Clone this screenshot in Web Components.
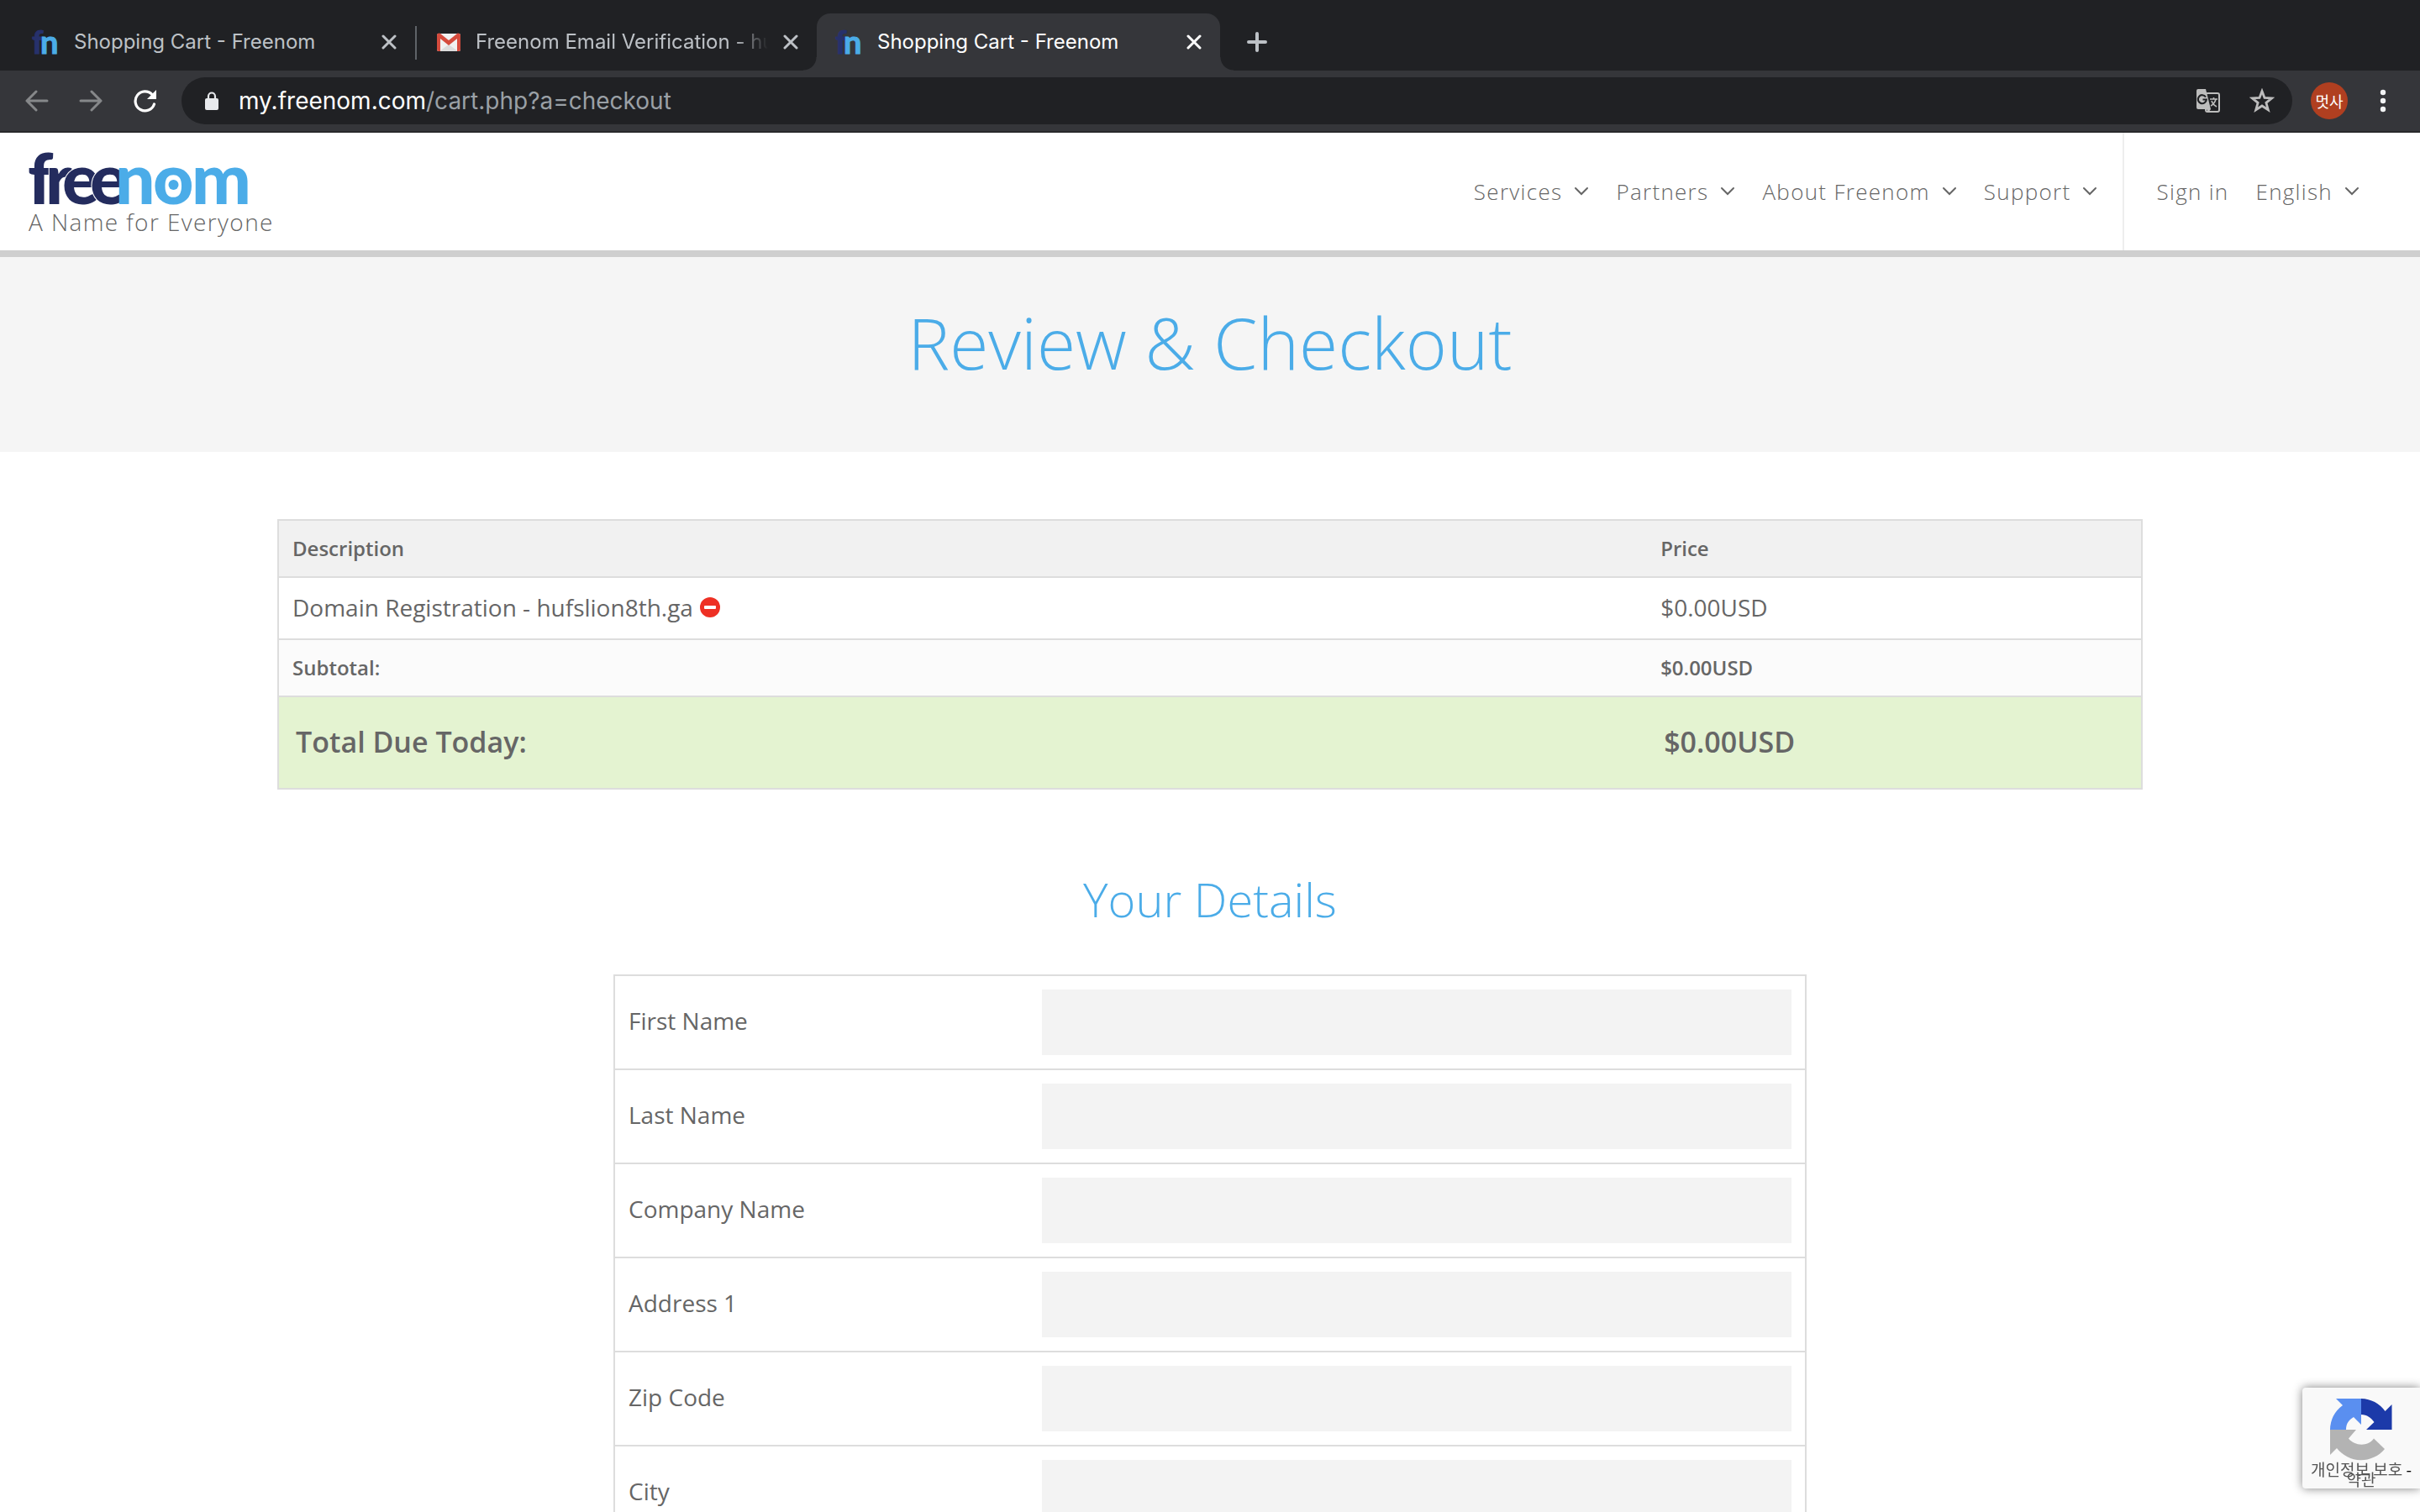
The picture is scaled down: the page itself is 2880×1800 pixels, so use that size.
<!DOCTYPE html>
<html lang="en">
<head>
<meta charset="utf-8">
<title>Shopping Cart - Freenom</title>
<style>
html,body{margin:0;height:100%}
body{overflow:hidden;background:#fff;color:#666;font-family:"Open Sans","Noto Sans CJK KR",sans-serif}
</style>
</head>
<body>
<browser-window>
  <tab-strip slot="chrome">
    <browser-tab icon="fn">Shopping Cart - Freenom</browser-tab>
    <browser-tab icon="gmail" divided>Freenom Email Verification - hu</browser-tab>
    <browser-tab icon="fn" active>Shopping Cart - Freenom</browser-tab>
  </tab-strip>
  <browser-toolbar slot="chrome"><span slot="host">my.freenom.com</span><span slot="path">/cart.php?a=checkout</span></browser-toolbar>
  <site-header>
    <site-logo slot="logo">A Name for Everyone</site-logo>
    <nav-item menu>Services</nav-item>
    <nav-item menu>Partners</nav-item>
    <nav-item menu>About Freenom</nav-item>
    <nav-item menu>Support</nav-item>
    <nav-item slot="account">Sign in</nav-item>
    <nav-item slot="account" menu>English</nav-item>
  </site-header>
  <page-banner>Review &amp; Checkout</page-banner>
  <cart-summary></cart-summary>
  <details-form>Your Details</details-form>
  <recaptcha-badge></recaptcha-badge>
</browser-window>

<script>
const define = (name, html) => {
  const t = document.createElement('template');
  t.innerHTML = html;
  customElements.define(name, class extends HTMLElement {
    constructor() {
      super();
      this.attachShadow({ mode: 'open' }).append(t.content.cloneNode(true));
    }
  });
};

define('browser-window', `
<style>
:host{display:flex;flex-direction:column;height:100vh;background:#fff}
main{flex:1;min-height:0;overflow:hidden}
</style>
<slot name="chrome"></slot><main><slot></slot></main>`);

define('tab-strip', `
<style>
:host{display:flex;align-items:flex-end;height:84px;padding-left:16px;background:#202124}
button{display:flex;width:56px;height:68px;margin-left:16px;padding:0;border:0;background:none;align-items:center;justify-content:center}
svg{display:block}
</style>
<slot></slot>
<button aria-label="New tab"><svg width="24" height="24" viewBox="0 0 24 24"><path d="M12 2v20M2 12h20" stroke="#bdc1c6" stroke-width="4" stroke-linecap="round"/></svg></button>`);

/* One tab: favicon, title that fades out at its end, close button. */
customElements.define('browser-tab', class extends HTMLElement {
  constructor() {
    super();
    const fn = `<svg class="icon" width="32" height="32" viewBox="0 0 32 32" font-family="Lato" font-weight="700" font-size="38"><text x="-2" y="30" fill="#27316b" stroke="#27316b">f</text><text x="8" y="30" fill="#4bace8" stroke="#4bace8">n</text></svg>`;
    const gmail = `<svg class="icon" width="32" height="32" viewBox="0 0 32 32"><rect x="2" y="6" width="28" height="21" rx="2" fill="#f1f1f1"/><path d="M16 19L27 27H5z" fill="#dcdcdc"/><path d="M2 8v17a2 2 0 0 0 2 2h2V12l10 8 10-8v15h2a2 2 0 0 0 2-2V8c0-2-3-3-4-2L16 14 6 6C4 5 2 6 2 8z" fill="#d54b3d"/></svg>`;
    this.attachShadow({ mode: 'open' }).innerHTML = `
<style>
:host{display:flex;position:relative;box-sizing:border-box;width:478px;height:68px;padding:0 16px 0 24px;align-items:center;color:#bdc1c6;font-family:Inter,"Liberation Sans",sans-serif;font-size:24px;line-height:32px}
:host([active]){background:#35363a;color:#fff;border-radius:16px 16px 0 0;width:480px}
:host([divided])::before{content:"";position:absolute;left:0;top:15px;width:2px;height:40px;background:#5f6368}
:host([active])::before,:host([active])::after{content:"";position:absolute;bottom:0;width:16px;height:16px}
:host([active])::before{right:100%;background:radial-gradient(circle at 0 0,#202124 15px,#35363a 16px)}
:host([active])::after{left:100%;background:radial-gradient(circle at 100% 0,#202124 15px,#35363a 16px)}
.icon{flex:none;margin-right:16px;overflow:visible}
.title{flex:1;min-width:0;overflow:hidden;white-space:nowrap}
:host([divided]) .title{-webkit-mask-image:linear-gradient(90deg,#000 calc(100% - 40px),transparent);mask-image:linear-gradient(90deg,#000 calc(100% - 40px),transparent)}
button{flex:none;display:flex;margin:0 0 0 12px;padding:6px;border:0;background:none;color:inherit}
</style>
${this.getAttribute('icon') === 'gmail' ? gmail : fn}<span class="title"><slot></slot></span>
<button aria-label="Close tab"><svg width="18" height="18" viewBox="0 0 18 18"><path d="M2 2l14 14M16 2L2 16" stroke="currentColor" stroke-width="3" stroke-linecap="round"/></svg></button>`;
  }
});

define('browser-toolbar', `
<style>
:host{display:flex;box-sizing:border-box;height:74px;padding:8px 28px 0 20px;align-items:flex-start;background:#35363a;border-bottom:2px solid #28292b;font-family:Inter,"Liberation Sans",sans-serif;font-size:28px;line-height:56px}
button{flex:none;display:flex;align-items:center;justify-content:center;width:48px;height:56px;margin-right:16px;padding:0;border:0;background:none}
.omni{flex:1;display:flex;align-items:center;box-sizing:border-box;height:56px;margin-left:4px;padding:0 20px 0 24px;border-radius:28px;background:#202124;color:#9aa0a6}
.url{flex:1;margin-left:20px;white-space:nowrap}
.omni button{width:32px;margin:0 0 0 32px}
::slotted([slot=host]){color:#fff}
.me{width:44px;height:44px;border-radius:50%;margin:6px 0 0 22px;background:#b03f20;color:#fff;font:18px/44px "Noto Sans CJK KR",sans-serif}
.more{width:32px;margin:0 0 0 26px}
</style>
<button aria-label="Back"><svg width="28" height="28" viewBox="0 0 28 28" fill="none" stroke="#86888a" stroke-width="3" stroke-linecap="round" stroke-linejoin="round"><path d="M26 14H2M13 3L2 14l11 11"/></svg></button>
<button aria-label="Forward"><svg width="28" height="28" viewBox="0 0 28 28" fill="none" stroke="#86888a" stroke-width="3" stroke-linecap="round" stroke-linejoin="round"><path d="M2 14h24M15 3l11 11-11 11"/></svg></button>
<button aria-label="Reload"><svg width="28" height="28" viewBox="0 0 28 28"><path d="M25.500 18A11.500 11.500 0 1 1 23 6.500" fill="none" stroke="#fff" stroke-width="3.200" stroke-linecap="round"/><path d="M28 1v11H17z" fill="#fff"/></svg></button>
<div class="omni">
<svg width="24" height="24" viewBox="0 0 24 24"><rect x="4" y="9" width="16" height="14" rx="2" fill="#e8eaed"/><path d="M8 10V6.500a4 4 0 0 1 8 0V10" fill="none" stroke="#e8eaed" stroke-width="2.200"/></svg>
<span class="url"><slot name="host"></slot><slot name="path"></slot></span>
<button aria-label="Translate this page"><svg width="30" height="30" viewBox="0 0 30 30"><rect x="12" y="6" width="16" height="22" rx="2" fill="none" stroke="#bdbdbd" stroke-width="2"/><path d="M3 1h9l6 24H3a2 2 0 0 1-2-2V3a2 2 0 0 1 2-2z" fill="#bdbdbd"/><path d="M13 25h5l-3 4z" fill="#bdbdbd"/><path d="M12 10.500A5 5 0 1 0 12.800 13.500H8.500" fill="none" stroke="#202124" stroke-width="2.200"/><path d="M17 13h9M21.500 11v2M24 13c-1 4-4 7-6 8M19 15c1 3 4 6 6 7" fill="none" stroke="#bdbdbd" stroke-width="1.600"/></svg></button>
<button aria-label="Bookmark this tab"><svg width="30" height="30" viewBox="0 0 30 30"><path d="M15 3.500l3 8 8.700.4-6.800 5.400 2.400 8.400L15 21l-7.300 4.700 2.400-8.400-6.800-5.400 8.700-.4z" fill="none" stroke="#bdbdbd" stroke-width="2.800"/></svg></button>
</div>
<button class="me" aria-label="Profile">멋사</button>
<button class="more" aria-label="Menu"><svg width="8" height="28" viewBox="0 0 8 28" fill="#f1f3f4"><circle cx="4" cy="4" r="3.200"/><circle cx="4" cy="14" r="3.200"/><circle cx="4" cy="24" r="3.200"/></svg></button>`);

define('site-header', `
<style>
:host{display:flex;height:140px;border-bottom:8px solid #cfcfcf;padding:0 72px 0 34px}
.logo{flex:1}
nav{display:flex;align-items:center;gap:32px}
.account{padding-left:38px;margin-left:30px;border-left:2px solid #eee}
</style>
<div class="logo"><slot name="logo"></slot></div>
<nav><slot></slot></nav>
<nav class="account"><slot name="account"></slot></nav>`);

define('site-logo', `
<style>
:host{display:flex;flex-direction:column;padding-top:22px;font-weight:300;font-size:28px;line-height:36px;letter-spacing:.05em}
svg{display:block;overflow:visible}
p{margin:2px 0 0}
</style>
<svg width="264" height="64" viewBox="0 0 264 64" role="img" aria-label="freenom" font-family="Lato" font-weight="900" font-size="84" letter-spacing="0">
<clipPath id="c"><path d="M-4-8h112v80H-4z"/></clipPath>
<text y="62.500" clip-path="url(#c)" fill="#242c5e" stroke="#fff" stroke-width="2" paint-order="stroke" x="-1 20 40 73">free</text>
<text y="62.500" fill="#4bace8" x="103 148 194">nom</text>
<circle cx="172.500" cy="40" r="6" fill="#4bace8"/>
</svg>
<p><slot></slot></p>`);

customElements.define('nav-item', class extends HTMLElement {
  constructor() {
    super();
    const chevron = this.hasAttribute('menu')
      ? '<svg width="18" height="12" viewBox="0 0 18 12"><path d="M2 2l7 7 7-7" fill="none" stroke="#666" stroke-width="2" stroke-linecap="round"/></svg>' : '';
    this.attachShadow({ mode: 'open' }).innerHTML = `
<style>
:host{display:block;font-weight:300;font-size:26px;line-height:36px;letter-spacing:.05em}
a{display:flex;align-items:center;gap:14px;color:inherit;text-decoration:none;white-space:nowrap}
</style>
<a href="#"><span><slot></slot></span>${chevron}</a>`;
  }
});

define('page-banner', `
<style>
:host{display:block;padding:44px 0 72px;background:#f5f5f5}
h1{margin:0;text-align:center;font-weight:300;font-size:84px;line-height:116px;color:#4bace8}
</style>
<h1><slot></slot></h1>`);

define('cart-summary', `
<style>
:host{display:block;width:77.083%;margin:80px auto 0}
table{width:100%;border-collapse:collapse;table-layout:fixed;font-size:28px;line-height:40px}
th,td{box-sizing:border-box;text-align:left;padding:15px 16px 17px;font-weight:400}
tr{border:2px solid #ddd}
.price{width:26.550%}
.head th,.sub td{padding:16px;font-size:24px;line-height:34px;font-weight:600}
.head{background:#f1f1f1}
.sub{background:#fbfbfb}
.total{background:#e4f3d1}
.total td{padding:29px 20px 31px;font-size:34px;line-height:48px;font-weight:600}
.item{display:flex;align-items:center;gap:8px}
button{display:flex;padding:0;border:0;background:none}
</style>
<table>
<thead><tr class="head"><th>Description</th><th class="price">Price</th></tr></thead>
<tbody>
<tr><td><span class="item">Domain Registration - hufslion8th.ga <button aria-label="Remove"><svg width="24" height="24" viewBox="0 0 24 24"><circle cx="12" cy="12" r="12" fill="#ee3024"/><rect x="5" y="10" width="14" height="4" rx="1" fill="#fff"/></svg></button></span></td><td>$0.00USD</td></tr>
<tr class="sub"><td>Subtotal:</td><td>$0.00USD</td></tr>
<tr class="total"><td>Total Due Today:</td><td>$0.00USD</td></tr>
</tbody>
</table>`);

customElements.define('details-form', class extends HTMLElement {
  constructor() {
    super();
    const rows = ['First Name', 'Last Name', 'Company Name', 'Address 1', 'Zip Code', 'City'];
    this.attachShadow({ mode: 'open' }).innerHTML = `
<style>
:host{display:block;width:49.306%;margin:90px auto 0}
h2{margin:0 0 50px;text-align:center;font-weight:300;font-size:56px;line-height:80px;color:#4bace8}
form{border:2px solid #ddd;border-bottom:0}
.row{display:flex;align-items:center;padding:16px;border-bottom:2px solid #ddd}
label{flex:1;padding-bottom:4px;font-size:28px;line-height:40px}
input{box-sizing:border-box;width:64.450%;height:78px;padding:0 16px;border:0;border-radius:0;background:#f3f3f3;font:28px "Open Sans",sans-serif;color:#666}
</style>
<h2><slot></slot></h2>
<form>${rows.map((r, i) => `<div class="row"><label for="f${i}">${r}</label><input id="f${i}" type="text"></div>`).join('')}</form>`;
  }
});

/* Floating badge over the page's lower right corner. */
define('recaptcha-badge', `
<style>
:host{position:fixed;right:0;bottom:28px;box-sizing:border-box;width:140px;height:120px;padding:13px 0 0;border-radius:4px 0 0 4px;background:#f9f9f9;box-shadow:0 0 12px #808080;text-align:center;font:19px/12px "Noto Sans CJK KR",sans-serif;color:#555}
svg{display:block;margin:0 auto 4px}
a{color:inherit;text-decoration:none}
i{font-style:normal;color:#000}
p{margin:0;white-space:nowrap}
</style>
<svg width="74" height="74" viewBox="0 0 74 74">
<path d="M73.500 37V7l-8 8A37 37 0 0 0 37 0v19c7 0 12 4 15.500 9L43 37z" fill="#1c3aa9"/>
<path d="M37 0H7l8 8A37 37 0 0 0 0 37h19c0-8 4-12 9-15l9 9z" fill="#5a8ff0"/>
<path d="M0 37v30l8-8a36.500 36.500 0 0 0 57 1L52 47.500c-7 10-23 9-30 0L31 37z" fill="#b3b3b3"/>
</svg>
<p><a href="#">개인정보 보호</a><i> -</i></p><p><a href="#">약관</a></p>`);
</script>
</body>
</html>
